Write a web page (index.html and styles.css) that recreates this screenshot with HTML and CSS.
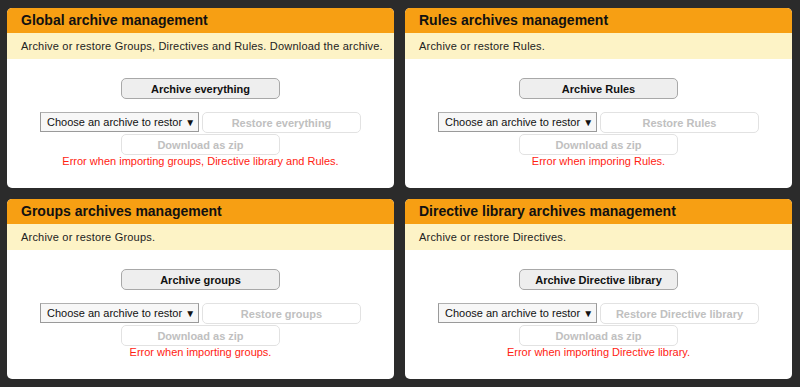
FILE: index.html
```html
<!DOCTYPE html>
<html lang="en">
<head>
    <meta charset="UTF-8">
    <title>Archives management</title>
    <link rel="stylesheet" href="styles.css">
</head>
<body>
    <div class="archives">
        <div class="panel">
            <h2 class="panel-title">Global archive management</h2>
            <p class="panel-desc">Archive or restore Groups, Directives and Rules. Download the archive.</p>
            <div class="panel-body">
                <button class="btn">Archive everything</button>
                <div class="restore-row">
                    <div class="select"><span class="select-text">Choose an archive to restor</span><span class="select-arrow">▼</span></div>
                    <button class="btn" disabled>Restore everything</button>
                </div>
                <button class="btn" disabled>Download as zip</button>
                <p class="error">Error when importing groups, Directive library and Rules.</p>
            </div>
        </div>

        <div class="panel">
            <h2 class="panel-title">Rules archives management</h2>
            <p class="panel-desc">Archive or restore Rules.</p>
            <div class="panel-body">
                <button class="btn">Archive Rules</button>
                <div class="restore-row">
                    <div class="select"><span class="select-text">Choose an archive to restor</span><span class="select-arrow">▼</span></div>
                    <button class="btn" disabled>Restore Rules</button>
                </div>
                <button class="btn" disabled>Download as zip</button>
                <p class="error">Error when imporing Rules.</p>
            </div>
        </div>

        <div class="panel">
            <h2 class="panel-title">Groups archives management</h2>
            <p class="panel-desc">Archive or restore Groups.</p>
            <div class="panel-body">
                <button class="btn">Archive groups</button>
                <div class="restore-row">
                    <div class="select"><span class="select-text">Choose an archive to restor</span><span class="select-arrow">▼</span></div>
                    <button class="btn" disabled>Restore groups</button>
                </div>
                <button class="btn" disabled>Download as zip</button>
                <p class="error">Error when importing groups.</p>
            </div>
        </div>

        <div class="panel">
            <h2 class="panel-title">Directive library archives management</h2>
            <p class="panel-desc">Archive or restore Directives.</p>
            <div class="panel-body">
                <button class="btn">Archive Directive library</button>
                <div class="restore-row">
                    <div class="select"><span class="select-text">Choose an archive to restor</span><span class="select-arrow">▼</span></div>
                    <button class="btn" disabled>Restore Directive library</button>
                </div>
                <button class="btn" disabled>Download as zip</button>
                <p class="error">Error when importing Directive library.</p>
            </div>
        </div>
    </div>
</body>
</html>
```

FILE: styles.css
```css
body {
    font-family: "Liberation Sans", Arial, sans-serif;
    background-color: #2b2b2b;
    margin: 0;
    padding: 8px 8px 8px 7px;
}

.archives {
    display: grid;
    grid-template-columns: 387px 387px;
    grid-auto-rows: 180px;
    gap: 11px;
}

.panel {
    background: white;
    border-radius: 5px;
    overflow: hidden;
    display: flex;
    flex-direction: column;
}

.panel-title {
    background-color: #f79f13;
    margin: 0;
    height: 25px;
    line-height: 25px;
    padding: 0 14px;
    font-size: 14px;
    font-weight: bold;
    color: #111;
}

.panel-desc {
    background-color: #fdf3c6;
    margin: 0;
    height: 26px;
    line-height: 26px;
    padding: 0 14px;
    font-size: 11px;
    letter-spacing: 0.2px;
    white-space: nowrap;
    color: #222;
}

.panel-body {
    display: flex;
    flex-direction: column;
    align-items: center;
    padding-top: 19px;
}

.btn {
    width: 159px;
    height: 21px;
    padding: 0;
    font-family: inherit;
    font-size: 11px;
    font-weight: bold;
    color: #111;
    background: #eeeeee;
    border: 1px solid #a8a8a8;
    border-radius: 5px;
}

.btn:disabled {
    background: white;
    border-color: #e2e2e2;
    color: #c0c0c0;
}

.restore-row {
    display: flex;
    gap: 3px;
    margin-top: 13px;
    margin-bottom: 1px;
}

.select {
    width: 159px;
    height: 20px;
    box-sizing: border-box;
    display: flex;
    align-items: center;
    padding: 0 5px 0 6px;
    background: #f7f7f7;
    border: 1px solid #9a9a9a;
    border-top-color: #b0b0b0;
    font-size: 11px;
    color: #111;
}

.select-text {
    flex: 1;
    white-space: nowrap;
}

.select-arrow {
    font-size: 10px;
    margin-left: 3px;
}

.error {
    margin: 0;
    font-size: 11px;
    color: #f21;
    line-height: 13px;
}
```
